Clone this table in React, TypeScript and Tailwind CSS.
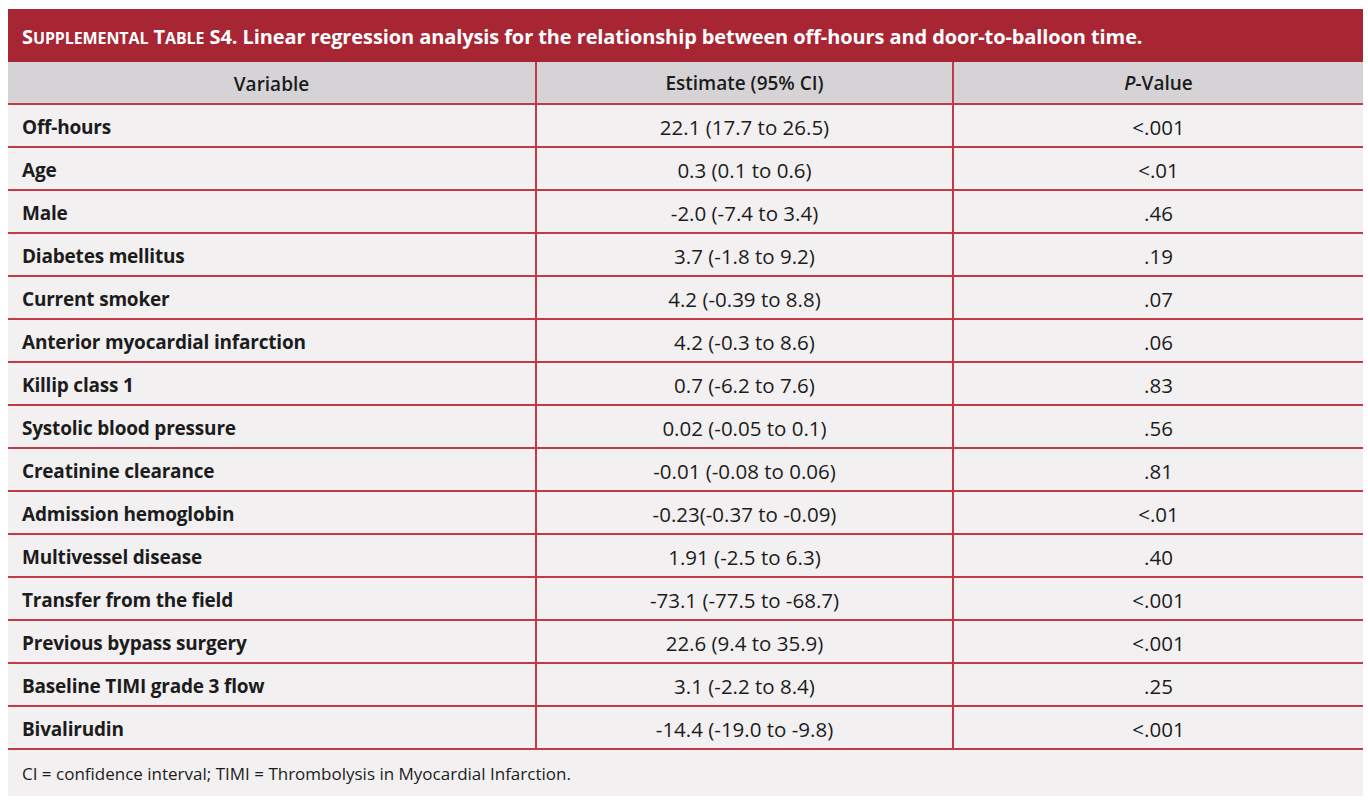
const rows = [
  ["Off-hours", "22.1 (17.7 to 26.5)", "<.001"],
  ["Age", "0.3 (0.1 to 0.6)", "<.01"],
  ["Male", "-2.0 (-7.4 to 3.4)", ".46"],
  ["Diabetes mellitus", "3.7 (-1.8 to 9.2)", ".19"],
  ["Current smoker", "4.2 (-0.39 to 8.8)", ".07"],
  ["Anterior myocardial infarction", "4.2 (-0.3 to 8.6)", ".06"],
  ["Killip class 1", "0.7 (-6.2 to 7.6)", ".83"],
  ["Systolic blood pressure", "0.02 (-0.05 to 0.1)", ".56"],
  ["Creatinine clearance", "-0.01 (-0.08 to 0.06)", ".81"],
  ["Admission hemoglobin", "-0.23(-0.37 to -0.09)", "<.01"],
  ["Multivessel disease", "1.91 (-2.5 to 6.3)", ".40"],
  ["Transfer from the field", "-73.1 (-77.5 to -68.7)", "<.001"],
  ["Previous bypass surgery", "22.6 (9.4 to 35.9)", "<.001"],
  ["Baseline TIMI grade 3 flow", "3.1 (-2.2 to 8.4)", ".25"],
  ["Bivalirudin", "-14.4 (-19.0 to -9.8)", "<.001"],
];

export default function App() {
  return (
    <div className="min-h-screen bg-white pt-[9px] pl-[8px] pr-[5px] font-['Open_Sans',sans-serif] text-[#1c1c1c]">
      <div className="w-[1355px]">
        {/* title bar */}
        <div className="h-[53px] bg-[#a82533] flex items-center px-[14px] pt-[2px]">
          <span className="text-white text-[20px] font-bold tracking-[-0.1px]">
            S<span className="text-[16px] uppercase">upplemental</span> T<span className="text-[16px] uppercase">able</span> S4. Linear regression analysis for the relationship between off-hours and door-to-balloon time.
          </span>
        </div>

        {/* column header */}
        <div className="grid grid-cols-[529px_417px_1fr] bg-[#d5d3d6] border-b-2 border-[#c23a48] h-[43px] text-[19px] font-semibold">
          <div className="flex items-center justify-center pt-[3px] border-r-2 border-[#c23a48]">Variable</div>
          <div className="flex items-center justify-center pt-[1px] border-r-2 border-[#c23a48]">Estimate (95% CI)</div>
          <div className="flex items-center justify-center pt-[1px]">
            <span><i>P</i>-Value</span>
          </div>
        </div>

        {/* body */}
        {rows.map(([label, est, p]) => (
          <div
            key={label}
            className="grid grid-cols-[529px_417px_1fr] bg-[#f2f0f1] border-b-2 border-[#c23a48] h-[43px]"
          >
            <div className="flex items-center pl-[14px] pt-[3px] text-[19px] font-bold tracking-[-0.2px] border-r-2 border-[#c23a48]">{label}</div>
            <div className="flex items-center justify-center pt-[3px] text-[20.5px] font-medium border-r-2 border-[#c23a48]">{est}</div>
            <div className="flex items-center justify-center pt-[3px] text-[20.5px] font-medium">{p}</div>
          </div>
        ))}

        {/* footnote */}
        <div className="h-[46px] bg-[#f2f0f1] flex items-center pl-[14px] pt-[1px] text-[17px]">
          CI = confidence interval; TIMI = Thrombolysis in Myocardial Infarction.
        </div>
      </div>
    </div>
  );
}
